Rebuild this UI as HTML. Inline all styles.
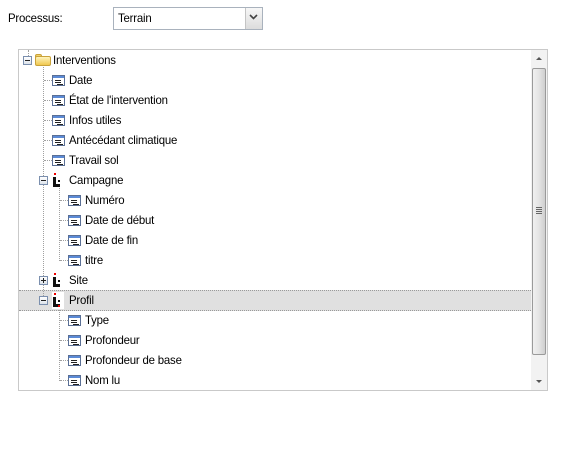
<!DOCTYPE html>
<html><head><meta charset="utf-8">
<style>
*{margin:0;padding:0;box-sizing:border-box}
body{width:566px;height:460px;background:#fff;font-family:"Liberation Sans","DejaVu Sans",sans-serif;font-size:12px;color:#000;position:relative;overflow:hidden}
.a{position:absolute}
.t{position:absolute;line-height:20px;white-space:nowrap;letter-spacing:-0.2px;transform:scaleX(0.95);transform-origin:0 0}
.vl{position:absolute;border-left:1px dotted #a0a0a0;width:0}
.hl{position:absolute;border-top:1px dotted #a0a0a0;height:0}
.fi{position:absolute;width:13px;height:11px;border:1px solid #5a6f95;background:#fff}
.fi::before{content:"";position:absolute;left:0;top:0;right:0;height:2px;background:#5b8ad6}
.fi::after{content:"";position:absolute;left:2px;top:4px;width:6px;height:1px;background:#222;box-shadow:0 2px 0 #222,2px 4px 0 #222}
.ex{position:absolute;width:9px;height:9px;border:1px solid #7b8fae;background:linear-gradient(#fff,#dde3ea)}
.ex::before{content:"";position:absolute;left:1px;top:3px;width:5px;height:1px;background:#222}
.ex.p::after{content:"";position:absolute;left:3px;top:1px;width:1px;height:5px;background:#222}
.ci{position:absolute;width:10px;height:14px}
.ci b{position:absolute;background:#111}
</style></head><body>
<div class="t" style="left:8px;top:8px">Processus:</div>
<div class="a" style="left:113px;top:7px;width:150px;height:23px;border:1px solid #a9b2bd;background:#fff"></div>
<div class="t" style="left:118px;top:8px">Terrain</div>
<div class="a" style="left:245px;top:8px;width:17px;height:21px;background:linear-gradient(#f7f7f7,#dcdcdc);border-left:1px solid #c4c4c4"></div>
<svg class="a" style="left:249px;top:14px" width="9" height="6"><path d="M1 1 L4.5 4.5 L8 1" stroke="#444" stroke-width="1.6" fill="none"/></svg>

<div class="a" style="left:18px;top:49px;width:530px;height:342px;border:1px solid #c9c9c9"></div>
<div class="a" style="left:19px;top:290px;width:512px;height:21px;background:#e0e0e0;border-top:1px dotted #999;border-bottom:1px dotted #999"></div>
<div class="a" style="left:531px;top:50px;width:16px;height:340px;background:#f2f2f2"></div>
<div class="a" style="left:536px;top:57px;border-left:3px solid transparent;border-right:3px solid transparent;border-bottom:3px solid #555"></div>
<div class="a" style="left:536px;top:380px;border-left:3px solid transparent;border-right:3px solid transparent;border-top:3px solid #555"></div>
<div class="a" style="left:532px;top:68px;width:14px;height:287px;border:1px solid #9a9a9a;border-radius:2px;background:linear-gradient(90deg,#f0f0f0,#e4e4e4 50%,#cfcfcf)"></div>
<div class="a" style="left:536px;top:207px;width:6px;height:1px;background:#666;box-shadow:0 2px 0 #666,0 4px 0 #666,0 6px 0 #666"></div>

<!-- tree lines -->
<div class="vl" style="left:28px;top:50px;height:6px"></div>
<div class="vl" style="left:43px;top:67px;height:233px"></div>
<div class="hl" style="left:44px;top:80px;width:8px"></div>
<div class="hl" style="left:44px;top:100px;width:8px"></div>
<div class="hl" style="left:44px;top:120px;width:8px"></div>
<div class="hl" style="left:44px;top:140px;width:8px"></div>
<div class="hl" style="left:44px;top:160px;width:8px"></div>
<div class="vl" style="left:59px;top:188px;height:73px"></div>
<div class="vl" style="left:59px;top:308px;height:73px"></div>
<div class="hl" style="left:60px;top:200px;width:8px"></div>
<div class="hl" style="left:60px;top:220px;width:8px"></div>
<div class="hl" style="left:60px;top:240px;width:8px"></div>
<div class="hl" style="left:60px;top:260px;width:8px"></div>
<div class="hl" style="left:60px;top:320px;width:8px"></div>
<div class="hl" style="left:60px;top:340px;width:8px"></div>
<div class="hl" style="left:60px;top:360px;width:8px"></div>
<div class="hl" style="left:60px;top:380px;width:8px"></div>

<!-- Interventions -->
<div class="ex" style="left:23px;top:56px"></div>
<div class="a" style="left:35px;top:54px;width:7px;height:4px;background:#f3d36a;border:1px solid #c9a23a;border-bottom:none;border-radius:2px 2px 0 0"></div>
<div class="a" style="left:35px;top:56px;width:16px;height:10px;background:linear-gradient(#fff4bd,#f0c850);border:1px solid #c9a23a;border-radius:2px"></div>
<div class="t" style="left:53px;top:50px">Interventions</div>

<div class="fi" style="left:52px;top:75px"></div><div class="t" style="left:69px;top:70px">Date</div>
<div class="fi" style="left:52px;top:95px"></div><div class="t" style="left:69px;top:90px">État de l'intervention</div>
<div class="fi" style="left:52px;top:115px"></div><div class="t" style="left:69px;top:110px">Infos utiles</div>
<div class="fi" style="left:52px;top:135px"></div><div class="t" style="left:69px;top:130px">Antécédant climatique</div>
<div class="fi" style="left:52px;top:155px"></div><div class="t" style="left:69px;top:150px">Travail sol</div>

<div class="ex" style="left:39px;top:176px"></div>
<div class="ci" style="left:53px;top:173px"><b style="left:1px;top:0;width:2px;height:2px;background:#e00"></b><b style="left:0;top:4px;width:3px;height:10px"></b><b style="left:3px;top:11px;width:4px;height:3px"></b><b style="left:5px;top:7px;width:2px;height:2px"></b><b style="left:5px;top:11px;width:2px;height:2px"></b></div>
<div class="t" style="left:69px;top:170px">Campagne</div>

<div class="fi" style="left:68px;top:195px"></div><div class="t" style="left:85px;top:190px">Numéro</div>
<div class="fi" style="left:68px;top:215px"></div><div class="t" style="left:85px;top:210px">Date de début</div>
<div class="fi" style="left:68px;top:235px"></div><div class="t" style="left:85px;top:230px">Date de fin</div>
<div class="fi" style="left:68px;top:255px"></div><div class="t" style="left:85px;top:250px">titre</div>

<div class="ex p" style="left:39px;top:276px"></div>
<div class="ci" style="left:53px;top:273px"><b style="left:1px;top:0;width:2px;height:2px;background:#e00"></b><b style="left:0;top:4px;width:3px;height:10px"></b><b style="left:3px;top:11px;width:4px;height:3px"></b><b style="left:5px;top:7px;width:2px;height:2px"></b><b style="left:5px;top:11px;width:2px;height:2px"></b></div>
<div class="t" style="left:69px;top:270px">Site</div>

<div class="ex" style="left:39px;top:296px"></div>
<div class="a" style="left:52px;top:292px;width:12px;height:17px;background:#fff"></div>
<div class="ci" style="left:53px;top:293px"><b style="left:1px;top:0;width:2px;height:2px;background:#e00"></b><b style="left:0;top:4px;width:3px;height:10px"></b><b style="left:3px;top:11px;width:4px;height:3px"></b><b style="left:5px;top:7px;width:2px;height:2px"></b><b style="left:5px;top:12px;width:2px;height:2px;background:#e00"></b></div>
<div class="t" style="left:69px;top:290px">Profil</div>

<div class="fi" style="left:68px;top:315px"></div><div class="t" style="left:85px;top:310px">Type</div>
<div class="fi" style="left:68px;top:335px"></div><div class="t" style="left:85px;top:330px">Profondeur</div>
<div class="fi" style="left:68px;top:355px"></div><div class="t" style="left:85px;top:350px">Profondeur de base</div>
<div class="fi" style="left:68px;top:375px"></div><div class="t" style="left:85px;top:370px">Nom lu</div>
</body></html>
